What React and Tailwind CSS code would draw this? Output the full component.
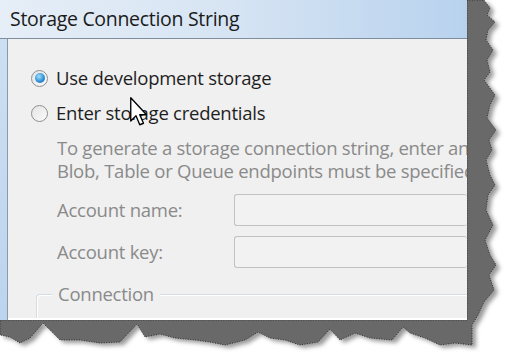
import React from 'react'

const font = { fontFamily: '"Open Sans", "Noto Sans", sans-serif' }

const tornShadow =
  '467,0 484,0 490,8 487,15 495,22 488,30 486,40 493,50 487,60 490,72 484,80 495,95 490,105 487,118 496,130 489,140 492,150 486,160 490,175 495,185 488,195 486,210 493,225 485,240 490,255 496,265 489,275 494,290 484,302 478,315 472,325 472,345 455,343 440,345 425,338 410,333 403,327 392,340 370,338 355,333 340,340 330,329 318,342 300,345 285,340 270,338 258,332 245,340 225,345 210,342 195,340 175,338 160,334 145,337 137,324 120,342 100,343 80,340 60,340 43,323 30,338 20,343 10,337 0,335 0,320 467,320'

function Radio({ checked }) {
  return (
    <span className="w-[17px] h-[17px] rounded-full border border-[#8e8f8f] bg-gradient-to-br from-[#e4e4e4] to-[#fafafa] flex items-center justify-center shrink-0">
      {checked && (
        <span className="w-[10px] h-[10px] rounded-full bg-[radial-gradient(circle_at_40%_35%,#9fe1fb,#2a8ad4_60%,#1766a8)]" />
      )}
    </span>
  )
}

function Cursor() {
  return (
    <svg className="absolute left-[130px] top-[97px]" width="18" height="30" viewBox="0 0 12 20">
      <path d="M0.5 0.5 L0.5 16 L4 12.5 L6.5 18.5 L9 17.5 L6.5 11.8 L11 11.8 Z" fill="#fff" stroke="#000" strokeWidth="0.9" strokeLinejoin="round" />
    </svg>
  )
}

export default function App() {
  return (
    <div className="relative w-[505px] h-[357px] bg-white overflow-hidden" style={font}>
      {/* torn paper shadow */}
      <svg className="absolute inset-0" width="505" height="357">
        <defs>
          <filter id="blur" x="-10%" y="-10%" width="120%" height="120%">
            <feGaussianBlur stdDeviation="2" />
          </filter>
        </defs>
        <polygon points={tornShadow} fill="#9a9a9a" transform="translate(4,3)" filter="url(#blur)" />
        <polygon points={tornShadow} fill="#696969" stroke="#1a1a1a" strokeWidth="0.8" strokeDasharray="1 1.5" />
      </svg>

      <div className="relative w-[467px] h-[320px] flex flex-col overflow-hidden">
        {/* title bar */}
        <div className="h-[39px] shrink-0 pl-[10px] flex items-center bg-gradient-to-r from-[#e6eef7] via-[#d6e4f3] to-[#b8d2ee] border-b border-[#7f8e9e]">
          <span className="text-[19.5px] text-[#1b1b1b] tracking-[-0.3px]">Storage Connection String</span>
        </div>

        <div className="flex-1 flex min-h-0">
          <div className="w-[8px] bg-gradient-to-b from-[#cddff2] to-[#bcd4ee] border-r border-[#8b9aab]" />
          <div className="flex-1 min-w-0 overflow-hidden bg-[#f0f0f0] border-b-2 border-white flex flex-col pl-[23px] pt-[28px] text-[18.5px] tracking-[-0.25px]">
            <label className="flex shrink-0 items-center gap-[8px] h-[22px] text-[#1e1e1e]">
              <Radio checked />
              <span>Use development storage</span>
            </label>
            <label className="flex shrink-0 items-center gap-[8px] h-[22px] mt-[13px] text-[#1e1e1e]">
              <Radio />
              <span>Enter storage credentials</span>
            </label>

            <div className="shrink-0 ml-[26px] mt-[12px] leading-[23px] text-[#8a8a8a] whitespace-nowrap overflow-hidden">
              <div>To generate a storage connection string, enter an account name and key.</div>
              <div>Blob, Table or Queue endpoints must be specified.</div>
            </div>

            <div className="shrink-0 ml-[26px] mt-[12px] flex flex-col gap-[10px] text-[#8a8a8a]">
              <div className="flex items-center h-[32px]">
                <span className="w-[177px] shrink-0">Account name:</span>
                <div className="flex-1 h-[32px] rounded-[3px] border border-[#c2c2c2] border-r-0 bg-[#f2f2f2]" />
              </div>
              <div className="flex items-center h-[32px]">
                <span className="w-[177px] shrink-0">Account key:</span>
                <div className="flex-1 h-[32px] rounded-[3px] border border-[#c2c2c2] border-r-0 bg-[#f2f2f2]" />
              </div>
            </div>

            <div className="relative mt-[26px] ml-[5px] h-[30px] shrink-0 border-t border-l border-[#d5dbe3] rounded-tl-[4px] shadow-[inset_1px_1px_0_#ffffff]">
              <span className="absolute -top-[13px] left-[15px] px-[6px] bg-[#f0f0f0] text-[#8a8a8a] leading-[24px]">Connection</span>
            </div>
          </div>
        </div>
      </div>

      <Cursor />
    </div>
  )
}
